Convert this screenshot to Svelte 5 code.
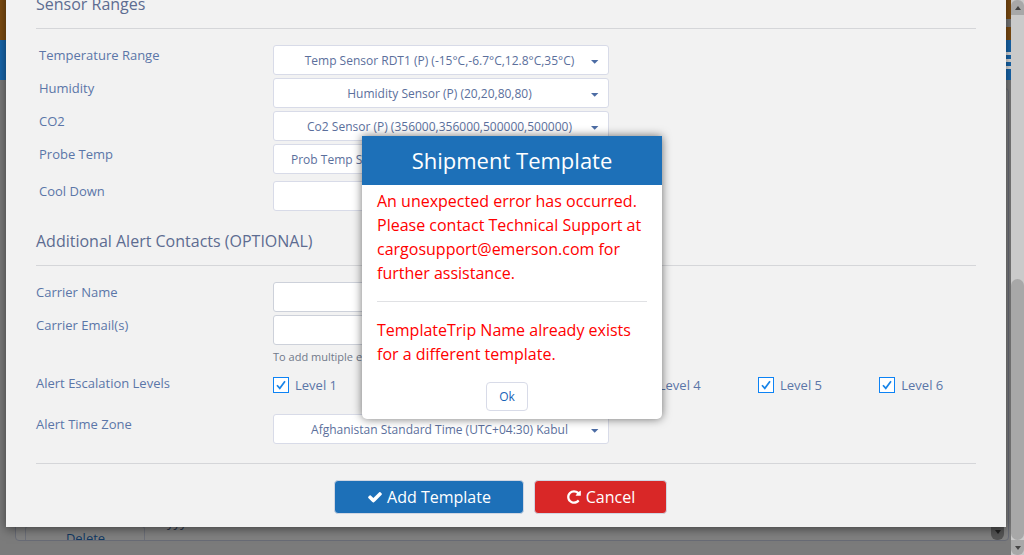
<script>
  const sensors = [
    { label: 'Temperature Range', value: 'Temp Sensor RDT1 (P) (-15°C,-6.7°C,12.8°C,35°C)' },
    { label: 'Humidity', value: 'Humidity Sensor (P) (20,20,80,80)' },
    { label: 'CO2', value: 'Co2 Sensor (P) (356000,356000,500000,500000)' },
    { label: 'Probe Temp', value: 'Prob Temp S', wide: true }
  ];
  const levels = [1, 2, 3, 4, 5, 6];
</script>

{#snippet select(value, wide)}
  <div class="field select" class:wide>
    <span class="value">{value}</span>
    <svg class="caret" width="8" height="4" viewBox="0 0 8 4"><path d="M0 0h7.4L3.7 3.8z" fill="#4c6ca4" /></svg>
  </div>
{/snippet}

<div class="screen">
  <div class="page">
    <div class="banner"><span class="cog"></span></div>
    <div class="navbar"><div class="burger"><i></i><i></i><i></i></div></div>
    <div class="content">
      <div class="panel">
        <div class="delete">Delete</div>
        <div class="date">yyy</div>
        <div class="inner-scroll"><span class="down"></span></div>
      </div>
    </div>
  </div>

  <div class="modal">
    <h2 class="first">Sensor Ranges</h2>
    <div class="sensors">
      {#each sensors as s}
        <div class="row">
          <label>{s.label}</label>
          {@render select(s.value, s.wide)}
        </div>
      {/each}
      <div class="row cool">
        <label>Cool Down</label>
        <div class="field"></div>
      </div>
    </div>

    <h2 class="second">Additional Alert Contacts (OPTIONAL)</h2>
    <div class="contacts">
      <div class="row">
        <label>Carrier Name</label>
        <div class="field input"></div>
      </div>
      <div class="row">
        <label>Carrier Email(s)</label>
        <div class="field input"></div>
      </div>
      <p class="hint">To add multiple e</p>
      <div class="row levels-row">
        <label>Alert Escalation Levels</label>
        <div class="levels">
          {#each levels as n}
            <div class="level">
              <svg width="16" height="16" viewBox="0 0 16 16">
                <rect x=".5" y=".5" width="15" height="15" fill="#fff" stroke="#0d83f5" />
                <path d="M4 8.2 6.8 11.3 12 4.3" fill="none" stroke="#1784e8" stroke-width="1.7" />
              </svg>
              <span>Level {n}</span>
            </div>
          {/each}
        </div>
      </div>
      <div class="row zone">
        <label>Alert Time Zone</label>
        {@render select('Afghanistan Standard Time (UTC+04:30) Kabul', false)}
      </div>
    </div>

    <div class="actions">
      <button class="add">
        <svg width="16" height="16" viewBox="0 0 1792 1792"><path fill="#fff" d="M1671 566q0 40-28 68l-724 724-136 136q-28 28-68 28t-68-28l-136-136-362-362q-28-28-28-68t28-68l136-136q28-28 68-28t68 28l294 295 656-657q28-28 68-28t68 28l136 136q28 28 28 68z" /></svg>
        <span>Add Template</span>
      </button>
      <button class="cancel">
        <svg width="16" height="16" viewBox="0 0 1792 1792"><path fill="#fff" d="M1664 256v448q0 26-19 45t-45 19h-448q-42 0-59-40-17-39 14-69l138-138q-148-137-349-137-104 0-198.500 40.500t-163.500 109.500-109.500 163.500-40.500 198.500 40.500 198.500 109.500 163.500 163.500 109.500 198.500 40.500q119 0 225-52t179-147q7-10 23-12 15 0 25 9l137 138q9 8 9.500 20.500t-7.500 22.500q-109 132-264 204.500t-327 72.500q-156 0-298-61t-245-164-164-245-61-298 61-298 164-245 245-164 298-61q147 0 284.500 55.500t244.500 156.500l130-129q29-31 70-14 39 17 39 59z" /></svg>
        <span>Cancel</span>
      </button>
    </div>
  </div>

  <div class="alert">
    <header>Shipment Template</header>
    <div class="message">
      <p>An unexpected error has occurred. Please contact Technical Support at cargosupport@emerson.com for further assistance.</p>
      <hr />
      <p>TemplateTrip Name already exists for a different template.</p>
    </div>
    <button class="ok">Ok</button>
  </div>

  <div class="scrollbar">
    <div class="end"><span class="up"></span></div>
    <div class="track"><div class="thumb"></div></div>
    <div class="end bottom"><span class="down"></span></div>
  </div>
</div>

<style>
  * { box-sizing: border-box; }
  .screen {
    position: relative;
    width: 1024px;
    height: 555px;
    overflow: hidden;
    font-family: "Open Sans", sans-serif;
    font-size: 13px;
    color: #5b76a8;
    background: #7b7b7b;
  }
  .page { display: flex; flex-direction: column; height: 555px; width: 1011px; }
  .banner { height: 40px; background: #7e4c11; display: flex; justify-content: flex-end; align-items: flex-end; }
  .cog { width: 5px; height: 8px; margin-bottom: 13px; background: #777; }
  .navbar { height: 40px; background: #1767ad; display: flex; justify-content: flex-end; padding-top: 12px; }
  .burger { width: 5px; display: flex; flex-direction: column; gap: 4px; }
  .burger i { height: 3px; background: #ddd; }
  .content { flex: 1; padding: 8px 2px 14px 15px; }
  .panel {
    height: 453px;
    border: 1px solid #686b75;
    border-radius: 4px;
    background: #818181;
    display: flex;
    align-items: flex-end;
    padding: 0 4px 0 9px;
    overflow: hidden;
  }
  .delete { width: 120px; height: 14px; overflow: hidden; border: 1px solid #6d7079; border-bottom: 0; color: #123962; text-align: center; line-height: 18px; padding: 2px 0 0 1px; border-radius: 3px 3px 0 0; }
  .date { height: 24px; margin-left: 22px; color: #283447; line-height: 12px; }
  .inner-scroll { width: 13px; height: 22px; margin-left: auto; background: #555; border-radius: 0 0 6px 6px; display: flex; align-items: flex-end; justify-content: center; padding-bottom: 6px; }
  .down, .up { width: 0; height: 0; border-left: 3.5px solid transparent; border-right: 3.5px solid transparent; }
  .down { border-top: 4px solid #444; }
  .up { border-bottom: 4px solid #444; }
  .inner-scroll .down { border-top-color: #222; }

  .modal {
    position: absolute;
    left: 6px;
    top: -12px;
    width: 1000px;
    height: 539px;
    padding: 0 30px;
    background: #f2f2f2;
    box-shadow: 0 2px 10px rgba(0, 0, 0, .5);
  }
  h2 { margin: 0; font-size: 16px; line-height: 24px; font-weight: 400; color: #5d6c91; border-bottom: 1px solid #d5d6d9; }
  .first { padding-top: 4px; height: 41px; }
  .second { height: 37px; }
  .sensors { padding-top: 16px; height: 200px; }
  .sensors label { padding-left: 3px; }
  .row { display: flex; height: 33px; }
  .cool { margin-top: 4px; }
  label { width: 237px; line-height: 20px; }
  .field { width: 336px; height: 30px; background: #fff; border: 1px solid #d8dbe8; border-radius: 3px; }
  .input { border-color: #cdd1da; }
  .select { display: flex; align-items: center; padding: 0 9px 0 12px; font-size: 12px; color: #5b6f9c; }
  .value { flex: 1; text-align: center; white-space: nowrap; line-height: 18px; padding: 2px 0 0 2px; }
  .wide .value { text-align: left; padding-left: 5px; }
  .caret { flex: none; margin-top: 4px; }
  .contacts { padding-top: 16px; height: 197px; }
  .hint { margin: 0 0 0 237px; height: 25px; line-height: 18px; font-size: 11px; color: #71798a; }
  .levels-row { height: 41px; }
  .levels-row label, .zone label { flex: none; }
  .levels { flex: 1; display: grid; grid-template-columns: repeat(6, 121.25px); padding-top: 4px; }
  .level { display: flex; gap: 6px; height: 16px; line-height: 17px; }
  .actions { border-top: 1px solid #d5d6d9; padding: 16px 11px 0 0; display: flex; justify-content: center; gap: 11px; }
  .actions button {
    height: 34px;
    border: 1px solid #d0d6e2;
    border-radius: 4px;
    color: #fff;
    font: 16px/24px "Open Sans", sans-serif;
    padding: 0;
    display: flex;
    align-items: center;
    justify-content: center;
    gap: 4px;
  }
  .actions .add { width: 190px; margin-right: -1px; background: #1d70b8; }
  .actions .cancel { width: 133px; background: #d92727; }

  .alert {
    position: absolute;
    left: 362px;
    top: 136px;
    width: 300px;
    height: 283px;
    background: #fff;
    border-radius: 0 0 5px 5px;
    box-shadow: 0 0 10px rgba(0, 0, 0, .55);
    display: flex;
    flex-direction: column;
    align-items: center;
  }
  header { width: 100%; height: 49px; background: #1d70b8; color: #fff; text-align: center; font-size: 22px; line-height: 48px; }
  .message { width: 100%; height: 197px; padding: 4px 15px 0; color: #f00; font-size: 16px; line-height: 24px; }
  p { margin: 0; }
  hr { margin: 16px 0; border: 0; height: 1px; background: #e0e1e4; }
  .ok { width: 42px; height: 29px; margin-right: 10px; padding: 0; background: #fff; border: 1px solid #d8dbe8; border-radius: 4px; color: #1763b8; font: 12px "Open Sans", sans-serif; }

  .scrollbar { position: absolute; right: 0; top: 0; width: 13px; height: 555px; display: flex; flex-direction: column; background: #cacaca; }
  .end { height: 15px; display: flex; align-items: center; justify-content: center; background: #a8a8a8; border-radius: 6px 6px 0 0; }
  .end.bottom { border-radius: 0 0 6px 6px; }
  .track { flex: 1; display: flex; align-items: flex-end; }
  .thumb { width: 13px; height: 261px; background: #a8a8a8; border-radius: 6.5px; }
</style>
